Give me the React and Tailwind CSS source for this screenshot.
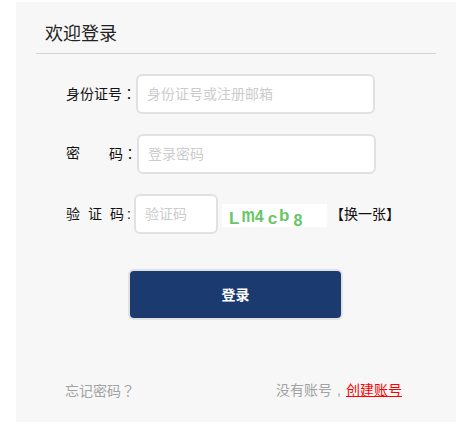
import React from "react";

function Field({ w, placeholder }) {
  return (
    <input
      readOnly
      placeholder={placeholder}
      className={`h-10 rounded-md border-2 border-[#e1e1e1] bg-white pl-[9px] text-[14px] outline-none placeholder:text-[#cccccc] ${w}`}
    />
  );
}

function Punct({ children }) {
  return <span className="font-['Noto_Sans_CJK_TC',sans-serif]">{children}</span>;
}

export default function App() {
  return (
    <div className="h-[429px] w-[475px] bg-white pl-4 pt-[2px] font-['Liberation_Sans','Noto_Sans_CJK_SC',sans-serif] text-[14px] text-[#111]">
      <div className="flex h-[420px] w-[440px] flex-col bg-[#f7f7f7] px-5">
        <div className="mt-[18px] h-[34px] border-b border-[#d2d2d2] pl-[9px] text-[18px] leading-[28px] text-[#222]">
          欢迎登录
        </div>

        <div className="mt-5 flex h-10 items-center pl-[30px]">
          <span className="w-[70px]">身份证号<Punct>：</Punct></span>
          <Field w="w-[239px]" placeholder="身份证号或注册邮箱" />
        </div>

        <div className="mt-5 flex h-10 items-center pl-[30px]">
          <span className="flex w-[71px]">
            <span>密</span>
            <span className="ml-[29px]">码<Punct>：</Punct></span>
          </span>
          <Field w="w-[239px]" placeholder="登录密码" />
        </div>

        <div className="mt-5 flex h-10 items-center pl-[30px]">
          <span className="flex w-[68px]">
            <span>验</span>
            <span className="ml-2">证</span>
            <span className="ml-2 flex">码<span className="ml-[3px]">:</span></span>
          </span>
          <Field w="w-[84px]" placeholder="验证码" />
          <div className="ml-1 mt-[3px] flex h-[23px] w-[105px] items-start bg-white pl-[7px] font-bold text-[#66c766]">
            <span className="mt-[5px] text-[17px] leading-[20px]">L</span>
            <span className="ml-[2px] mt-[3px] origin-[50%_15px] scale-y-[1.4] text-[15px] leading-[20px]">m</span>
            <span className="mt-[3px] text-[16px] leading-[20px]">4</span>
            <span className="ml-[4px] mt-[5px] text-[17px] leading-[20px]">c</span>
            <span className="ml-[2px] mt-[2px] text-[17px] leading-[20px]">b</span>
            <span className="ml-[4px] mt-[7px] text-[16px] leading-[20px]">8</span>
          </div>
          <span className="ml-[3px] mt-[1px]">【换一张】</span>
        </div>

        <button className="ml-[92px] mt-[35px] h-[51px] w-[215px] rounded-md border-2 border-[#e1e1e1] bg-[#1a3a70] pt-[1px] text-[14px] font-bold text-white">
          登录
        </button>

        <div className="mt-[60px] flex justify-between pl-[29px] pr-[34px] text-[#a2a2a2]">
          <span>忘记密码<Punct>？</Punct></span>
          <span>
            没有账号<span className="mx-[5px]">,</span><a href="#" className="text-[#ff0000] underline">创建账号</a>
          </span>
        </div>
      </div>
    </div>
  );
}
